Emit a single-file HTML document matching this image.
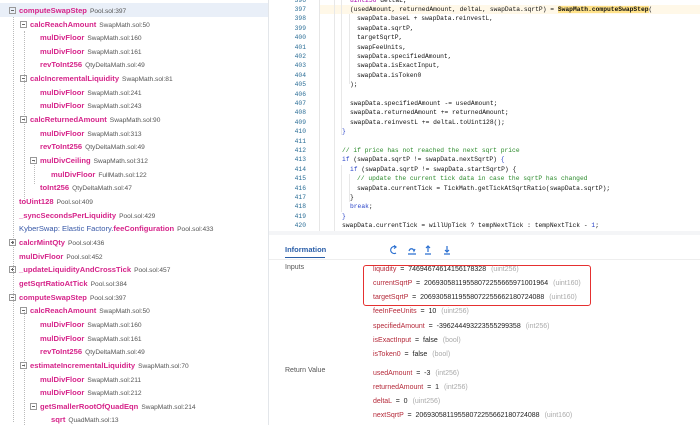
<!DOCTYPE html><html><head><style>
body{margin:0;width:700px;height:425px;overflow:hidden;background:#fff;font-family:"Liberation Sans",sans-serif;position:relative}
#left{position:absolute;left:0;top:0;width:268px;height:425px;border-right:1px solid #e3e6ea;background:#fff}
.r{position:absolute;height:13px;line-height:13px;font-size:7.6px;white-space:nowrap}
.r b{color:#d6248a;font-weight:bold}
.r i{font-style:normal;color:#555;font-size:6.6px;margin-left:3px}
.r b.bl{color:#3a5aa8}
.bx{display:inline-block;width:7px;height:7px;border:1px solid #999;margin-right:3px;vertical-align:-1px;position:relative;box-sizing:border-box}
.bx:after{content:"";position:absolute;left:1px;top:2px;width:3px;height:1px;background:#666}
.bx.p:before{content:"";position:absolute;left:2px;top:1px;width:1px;height:3px;background:#666}
.vl{position:absolute;border-left:1px dotted #bbb}
#code{position:absolute;left:269px;top:0;width:431px;height:231px;font-family:"Liberation Mono",monospace;font-size:6.3px}
.c{position:absolute;left:0;width:431px;height:9.4px;line-height:9.4px;white-space:pre}
.n{position:absolute;left:0;width:37px;text-align:right;color:#2a6d96}
.t{position:absolute;color:#111}
.k{color:#2a44c8}.cm{color:#2a8a2a}.nu{color:#2a44c8}
#bot{position:absolute;left:269px;top:231px;width:431px;height:194px;background:#fff;border-top:4px solid #f4f5f7}
.lab{position:absolute;font-size:7px;color:#555}
.v{position:absolute;left:104px;font-size:7px;color:#222;white-space:nowrap}
.v em{font-style:normal;color:#b52a3a}.v s{text-decoration:none;color:#aaa;margin-left:5px}
</style></head><body>
<div id="left">
<div style="position:absolute;left:0;top:3px;width:268px;height:14px;background:#e9eff8"></div>
<div class="vl" style="left:13px;top:17px;height:405px"></div>
<div class="vl" style="left:24px;top:31px;height:170px"></div>
<div class="vl" style="left:34px;top:160px;height:24px"></div>
<div class="vl" style="left:24px;top:310px;height:115px"></div>
<div class="r" style="left:9px;top:4px"><span class="bx"></span><b>computeSwapStep</b><i>Pool.sol:397</i></div>
<div class="r" style="left:20px;top:18px"><span class="bx"></span><b>calcReachAmount</b><i>SwapMath.sol:50</i></div>
<div class="r" style="left:40px;top:31px"><b>mulDivFloor</b><i>SwapMath.sol:160</i></div>
<div class="r" style="left:40px;top:45px"><b>mulDivFloor</b><i>SwapMath.sol:161</i></div>
<div class="r" style="left:40px;top:58px"><b>revToInt256</b><i>QtyDeltaMath.sol:49</i></div>
<div class="r" style="left:20px;top:72px"><span class="bx"></span><b>calcIncrementalLiquidity</b><i>SwapMath.sol:81</i></div>
<div class="r" style="left:40px;top:86px"><b>mulDivFloor</b><i>SwapMath.sol:241</i></div>
<div class="r" style="left:40px;top:99px"><b>mulDivFloor</b><i>SwapMath.sol:243</i></div>
<div class="r" style="left:20px;top:113px"><span class="bx"></span><b>calcReturnedAmount</b><i>SwapMath.sol:90</i></div>
<div class="r" style="left:40px;top:127px"><b>mulDivFloor</b><i>SwapMath.sol:313</i></div>
<div class="r" style="left:40px;top:140px"><b>revToInt256</b><i>QtyDeltaMath.sol:49</i></div>
<div class="r" style="left:30px;top:154px"><span class="bx"></span><b>mulDivCeiling</b><i>SwapMath.sol:312</i></div>
<div class="r" style="left:51px;top:168px"><b>mulDivFloor</b><i>FullMath.sol:122</i></div>
<div class="r" style="left:40px;top:181px"><b>toInt256</b><i>QtyDeltaMath.sol:47</i></div>
<div class="r" style="left:19px;top:195px"><b>toUint128</b><i>Pool.sol:409</i></div>
<div class="r" style="left:19px;top:209px"><b>_syncSecondsPerLiquidity</b><i>Pool.sol:429</i></div>
<div class="r" style="left:19px;top:222px"><b class="bl" style="font-weight:normal">KyberSwap: Elastic Factory.</b><b class="bl" style="color:#d6248a">feeConfiguration</b><i>Pool.sol:433</i></div>
<div class="r" style="left:9px;top:236px"><span class="bx p"></span><b>calcrMintQty</b><i>Pool.sol:436</i></div>
<div class="r" style="left:19px;top:250px"><b>mulDivFloor</b><i>Pool.sol:452</i></div>
<div class="r" style="left:9px;top:263px"><span class="bx p"></span><b>_updateLiquidityAndCrossTick</b><i>Pool.sol:457</i></div>
<div class="r" style="left:19px;top:277px"><b>getSqrtRatioAtTick</b><i>Pool.sol:384</i></div>
<div class="r" style="left:9px;top:291px"><span class="bx"></span><b>computeSwapStep</b><i>Pool.sol:397</i></div>
<div class="r" style="left:20px;top:304px"><span class="bx"></span><b>calcReachAmount</b><i>SwapMath.sol:50</i></div>
<div class="r" style="left:40px;top:318px"><b>mulDivFloor</b><i>SwapMath.sol:160</i></div>
<div class="r" style="left:40px;top:332px"><b>mulDivFloor</b><i>SwapMath.sol:161</i></div>
<div class="r" style="left:40px;top:345px"><b>revToInt256</b><i>QtyDeltaMath.sol:49</i></div>
<div class="r" style="left:20px;top:359px"><span class="bx"></span><b>estimateIncrementalLiquidity</b><i>SwapMath.sol:70</i></div>
<div class="r" style="left:40px;top:373px"><b>mulDivFloor</b><i>SwapMath.sol:211</i></div>
<div class="r" style="left:40px;top:386px"><b>mulDivFloor</b><i>SwapMath.sol:212</i></div>
<div class="r" style="left:30px;top:400px"><span class="bx"></span><b>getSmallerRootOfQuadEqn</b><i>SwapMath.sol:214</i></div>
<div class="r" style="left:51px;top:413px"><b>sqrt</b><i>QuadMath.sol:13</i></div>
</div>
<div id="code">
<div style="position:absolute;left:50px;top:0;width:1px;height:231px;background:#e6e6e6"></div>
<div style="position:absolute;left:51px;top:5px;width:380px;height:9.4px;background:#fff8e8"></div>
<div style="position:absolute;left:65px;top:0;width:1px;height:231px;background:#e8e8e8"></div>
<div style="position:absolute;left:72px;top:0;width:1px;height:135px;background:#e8e8e8"></div>
<div style="position:absolute;left:80px;top:14px;width:1px;height:70px;background:#e8e8e8"></div>
<div style="position:absolute;left:72px;top:165px;width:1px;height:47px;background:#e8e8e8"></div>
<div style="position:absolute;left:80px;top:174px;width:1px;height:28px;background:#e8e8e8"></div>
<div class="c" style="top:-4px"><span class="n">396</span><span class="t" style="left:81px"><span style="color:#a0a">uint256</span> deltaL;</span></div>
<div class="c" style="top:5px"><span class="n">397</span><span class="t" style="left:81px">(usedAmount, returnedAmount, deltaL, swapData.sqrtP) = <span style="background:#ffe28a;font-weight:bold">SwapMath.computeSwapStep</span>(</span></div>
<div class="c" style="top:14px"><span class="n">398</span><span class="t" style="left:88px">swapData.baseL + swapData.reinvestL,</span></div>
<div class="c" style="top:24px"><span class="n">399</span><span class="t" style="left:88px">swapData.sqrtP,</span></div>
<div class="c" style="top:33px"><span class="n">400</span><span class="t" style="left:88px">targetSqrtP,</span></div>
<div class="c" style="top:43px"><span class="n">401</span><span class="t" style="left:88px">swapFeeUnits,</span></div>
<div class="c" style="top:52px"><span class="n">402</span><span class="t" style="left:88px">swapData.specifiedAmount,</span></div>
<div class="c" style="top:61px"><span class="n">403</span><span class="t" style="left:88px">swapData.isExactInput,</span></div>
<div class="c" style="top:71px"><span class="n">404</span><span class="t" style="left:88px">swapData.isToken0</span></div>
<div class="c" style="top:80px"><span class="n">405</span><span class="t" style="left:81px">);</span></div>
<div class="c" style="top:90px"><span class="n">406</span></div>
<div class="c" style="top:99px"><span class="n">407</span><span class="t" style="left:81px">swapData.specifiedAmount -= usedAmount;</span></div>
<div class="c" style="top:108px"><span class="n">408</span><span class="t" style="left:81px">swapData.returnedAmount += returnedAmount;</span></div>
<div class="c" style="top:118px"><span class="n">409</span><span class="t" style="left:81px">swapData.reinvestL += deltaL.toUint128();</span></div>
<div class="c" style="top:127px"><span class="n">410</span><span class="t k" style="left:73px">}</span></div>
<div class="c" style="top:137px"><span class="n">411</span></div>
<div class="c" style="top:146px"><span class="n">412</span><span class="t cm" style="left:73px">// if price has not reached the next sqrt price</span></div>
<div class="c" style="top:155px"><span class="n">413</span><span class="t" style="left:73px"><span class="k">if</span> (swapData.sqrtP != swapData.nextSqrtP) <span class="k">{</span></span></div>
<div class="c" style="top:165px"><span class="n">414</span><span class="t" style="left:81px"><span class="k">if</span> (swapData.sqrtP != swapData.startSqrtP) {</span></div>
<div class="c" style="top:174px"><span class="n">415</span><span class="t cm" style="left:88px">// update the current tick data in case the sqrtP has changed</span></div>
<div class="c" style="top:184px"><span class="n">416</span><span class="t" style="left:88px">swapData.currentTick = TickMath.getTickAtSqrtRatio(swapData.sqrtP);</span></div>
<div class="c" style="top:193px"><span class="n">417</span><span class="t" style="left:81px">}</span></div>
<div class="c" style="top:202px"><span class="n">418</span><span class="t k" style="left:81px">break<span style="color:#222">;</span></span></div>
<div class="c" style="top:212px"><span class="n">419</span><span class="t k" style="left:73px">}</span></div>
<div class="c" style="top:221px"><span class="n">420</span><span class="t" style="left:73px">swapData.currentTick = willUpTick ? tempNextTick : tempNextTick - <span class="nu">1</span>;</span></div>
</div>
<div id="bot">
<div style="position:absolute;left:16px;top:10px;font-size:7.5px;color:#2a5ea8;font-weight:bold">Information</div>
<div style="position:absolute;left:16px;top:22px;width:40px;height:1px;background:#2a5ea8"></div>
<div style="position:absolute;left:0;top:24px;width:431px;height:1px;background:#eee"></div>
<svg style="position:absolute;left:120px;top:9px" width="70" height="12" viewBox="0 0 70 12" fill="none" stroke="#2a6fd0" stroke-width="1.2">
<path d="M7 3a3.5 3.5 0 1 0 0 6M5 1.5l2 1.5-2 1.5"/><path d="M20 7c1-3 4-3 5 0l1-2M19 10h8"/><path d="M39 2v6M37 4l2-2 2 2M36 10h6"/><path d="M58 2v6M56 6l2 2 2-2M55 10h6"/></svg>
<div class="lab" style="left:16px;top:29px">Inputs</div>
<div class="lab" style="left:16px;top:132px">Return Value</div>
<div style="position:absolute;left:94px;top:30px;width:228px;height:41px;border:1.5px solid #e53030;border-radius:3px;box-sizing:border-box"></div>
<div class="v" style="top:31px"><em>liquidity</em> &nbsp;= &nbsp;74694674614156178328<s>(uint256)</s></div>
<div class="v" style="top:45px"><em>currentSqrtP</em> &nbsp;= &nbsp;20693058119558072255665971001964<s>(uint160)</s></div>
<div class="v" style="top:59px"><em>targetSqrtP</em> &nbsp;= &nbsp;20693058119558072255662180724088<s>(uint160)</s></div>
<div class="v" style="top:73px"><em>feeInFeeUnits</em> &nbsp;= &nbsp;10<s>(uint256)</s></div>
<div class="v" style="top:88px"><em>specifiedAmount</em> &nbsp;= &nbsp;-396244493223555299358<s>(int256)</s></div>
<div class="v" style="top:102px"><em>isExactInput</em> &nbsp;= &nbsp;false<s>(bool)</s></div>
<div class="v" style="top:116px"><em>isToken0</em> &nbsp;= &nbsp;false<s>(bool)</s></div>
<div class="v" style="top:135px"><em>usedAmount</em> &nbsp;= &nbsp;-3<s>(int256)</s></div>
<div class="v" style="top:149px"><em>returnedAmount</em> &nbsp;= &nbsp;1<s>(int256)</s></div>
<div class="v" style="top:163px"><em>deltaL</em> &nbsp;= &nbsp;0<s>(uint256)</s></div>
<div class="v" style="top:177px"><em>nextSqrtP</em> &nbsp;= &nbsp;20693058119558072255662180724088<s>(uint160)</s></div>
</div>
</body></html>
